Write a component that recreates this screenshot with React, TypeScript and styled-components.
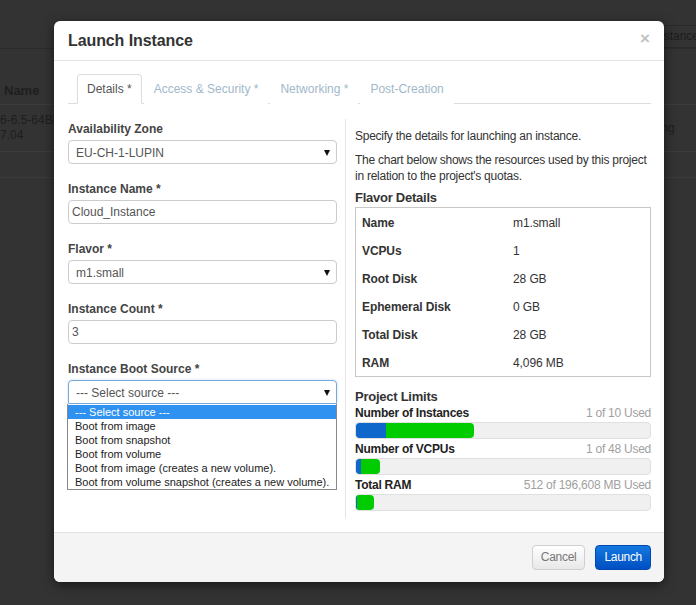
import React from "react";
import styled, { createGlobalStyle } from "styled-components";

type Limit = { label: string; used: string; current: number; added: number };

const flavor: [string, string][] = [
  ["Name", "m1.small"],
  ["VCPUs", "1"],
  ["Root Disk", "28 GB"],
  ["Ephemeral Disk", "0 GB"],
  ["Total Disk", "28 GB"],
  ["RAM", "4,096 MB"],
];

// widths in % of the bar, as measured on the chart
const limits: Limit[] = [
  { label: "Number of Instances", used: "1 of 10 Used", current: 10.2, added: 29.8 },
  { label: "Number of VCPUs", used: "1 of 48 Used", current: 1.8, added: 6.4 },
  { label: "Total RAM", used: "512 of 196,608 MB Used", current: 0.4, added: 5.8 },
];

const bootSources = [
  "--- Select source ---",
  "Boot from image",
  "Boot from snapshot",
  "Boot from volume",
  "Boot from image (creates a new volume).",
  "Boot from volume snapshot (creates a new volume).",
];

const GlobalStyle = createGlobalStyle`
  html, body { margin: 0; padding: 0; }
  body {
    background: #333;
    font-family: "Liberation Sans", Arial, Helvetica, sans-serif;
    overflow: hidden;
  }
  * { box-sizing: border-box; }
`;

const Page = styled.div`
  position: relative;
  width: 696px;
  height: 605px;
  overflow: hidden;
  background: #333;
  color: #1e1e1e;
  font-size: 12px;
`;

//{{{ dimmed page behind the dialog
const BgToolbar = styled.div`
  height: 49px;
  display: flex;
  justify-content: flex-end;
  align-items: flex-end;
  border-bottom: 1px solid #2c2c2c;
`;

const BgButton = styled.div`
  height: 23px;
  margin-right: -14px;
  padding: 0 10px;
  border: 1px solid #292929;
  border-radius: 3px;
  line-height: 21px;
  white-space: nowrap;
`;

const BgRow = styled.div<{ $h: number }>`
  display: grid;
  grid-template-columns: 54px 1fr 70px;
  height: ${(p) => p.$h}px;
  border-bottom: 1px solid #3b3b3b;
`;

const BgCell = styled.div<{ $justify?: string; $bold?: boolean }>`
  display: flex;
  flex-direction: column;
  justify-content: ${(p) => p.$justify || "center"};
  padding: 0 2px 0 4px;
  overflow: hidden;
  white-space: nowrap;
  line-height: 15px;
  font-weight: ${(p) => (p.$bold ? "bold" : "normal")};
  font-size: ${(p) => (p.$bold ? "13px" : "12px")};
`;
//}}}

const Modal = styled.div`
  position: absolute;
  left: 54px;
  top: 21px;
  width: 610px;
  height: 561px;
  display: flex;
  flex-direction: column;
  background: #fff;
  border-radius: 6px;
  box-shadow: 0 3px 12px rgba(0, 0, 0, 0.55);
  color: #333;
  font-size: 12px;
`;

const Header = styled.div`
  flex: none;
  height: 40px;
  display: flex;
  align-items: center;
  justify-content: space-between;
  padding: 0 14px;
  border-bottom: 1px solid #e5e5e5;
`;

const Title = styled.h3`
  margin: 0;
  font-size: 16px;
  font-weight: bold;
  color: #333;
  letter-spacing: -0.1px;
`;

const Close = styled.span`
  font-size: 17px;
  font-weight: bold;
  line-height: 20px;
  color: #c2c2c2;
  margin-top: -4px;
`;

const Body = styled.div`
  flex: 1;
  display: flex;
  flex-direction: column;
  padding: 13px 13px 14px 14px;
`;

const Tabs = styled.ul`
  display: flex;
  height: 30px;
  margin: 0;
  padding: 0 0 0 9px;
  list-style: none;
  border-bottom: 1px solid #ddd;
`;

const Tab = styled.li<{ $active?: boolean }>`
  height: 30px;
  margin: 0 2px -1px 0;
  padding: 0 9px;
  line-height: 28px;
  background: #fff;
  border: 1px solid ${(p) => (p.$active ? "#ddd" : "transparent")};
  border-bottom-color: ${(p) => (p.$active ? "#fff" : "transparent")};
  border-radius: 4px 4px 0 0;
  color: ${(p) => (p.$active ? "#555" : "#a2b8c9")};
  white-space: nowrap;
`;

const Columns = styled.div`
  flex: 1;
  display: flex;
  margin-top: 15px;
`;

const LeftCol = styled.div`
  width: 269px;
  flex: none;
  padding-top: 1px;
`;

const RightCol = styled.div`
  flex: 1;
  margin-left: 8px;
  padding: 9px 0 0 9px;
  border-left: 1px solid #e5e5e5;
  letter-spacing: -0.25px;
`;

const Field = styled.div`
  position: relative;
  margin-bottom: 16px;
`;

const Label = styled.label`
  display: block;
  margin-bottom: 4px;
  padding-top: 1px;
  height: 16px;
  font-size: 12px;
  font-weight: bold;
  line-height: 16px;
  color: #444;
`;

const TextInput = styled.input`
  display: block;
  width: 100%;
  height: 24px;
  padding: 0 3px;
  border: 1px solid #ccc;
  border-radius: 4px;
  font-family: "Liberation Sans", Arial, sans-serif;
  font-size: 12px;
  color: #555;
  outline: none;
`;

const Select = styled.div<{ $focus?: boolean }>`
  height: 24px;
  display: flex;
  align-items: center;
  justify-content: space-between;
  padding: 1px 6px 0 7px;
  border: 1px solid ${(p) => (p.$focus ? "#79a8de" : "#ccc")};
  border-radius: ${(p) => (p.$focus ? "4px 4px 0 0" : "4px")};
  box-shadow: ${(p) => (p.$focus ? "0 0 2px rgba(102, 160, 233, 0.5)" : "none")};
  color: #555;
`;

const Caret = styled.span`
  width: 0;
  height: 0;
  border-left: 3px solid transparent;
  border-right: 3px solid transparent;
  border-top: 6px solid #111;
`;

const DropList = styled.ul`
  position: absolute;
  top: 100%;
  left: -1px;
  right: 0;
  z-index: 2;
  margin: 0;
  padding: 1px 0 0;
  list-style: none;
  background: #fff;
  border: 1px solid #8a8a8a;
  border-top: none;
`;

const DropItem = styled.li<{ $selected?: boolean }>`
  height: 14px;
  padding-left: 7px;
  font-size: 11px;
  line-height: 15px;
  white-space: nowrap;
  color: ${(p) => (p.$selected ? "#fff" : "#222")};
  background: ${(p) => (p.$selected ? "#3092f0" : "transparent")};
`;

const Intro = styled.p<{ $gap: number }>`
  margin: 0 0 ${(p) => p.$gap}px;
  line-height: 16px;
  color: #333;
`;

const SectionTitle = styled.h4`
  margin: 0 0 1px;
  font-size: 13px;
  font-weight: bold;
  line-height: 16px;
  color: #333;
`;

const FlavorBox = styled.div`
  border: 1px solid #c8c8c8;
  margin-bottom: 12px;
  letter-spacing: -0.1px;
`;

const FlavorRow = styled.div`
  display: grid;
  grid-template-columns: 151px 1fr;
  height: 28px;
  align-items: center;
  padding: 1px 0 0 6px;
`;

const FlavorKey = styled.span`
  font-weight: bold;
`;

const LimitHead = styled.div`
  display: flex;
  justify-content: space-between;
  height: 14px;
  line-height: 15px;
  margin-bottom: 2px;
`;

const LimitName = styled.span`
  font-weight: bold;
  color: #222;
`;

const LimitUsed = styled.span`
  color: #a0a0a0;
`;

const Bar = styled.div`
  display: flex;
  height: 17px;
  margin-bottom: 3px;
  background: #f0f0f0;
  border: 1px solid #e0e0e0;
  border-radius: 4px;
  overflow: hidden;
`;

const BarPart = styled.div<{ $kind: "current" | "added" }>`
  height: 100%;
  background: ${(p) => (p.$kind === "current" ? "#0f67cc" : "#00cc00")};
  border-radius: ${(p) => (p.$kind === "current" ? "3px 0 0 3px" : "0 4px 4px 0")};
`;

const Footer = styled.div`
  flex: none;
  height: 50px;
  display: flex;
  align-items: center;
  justify-content: flex-end;
  gap: 10px;
  padding: 0 13px 1px 0;
  background: #f4f4f4;
  border-top: 1px solid #e2e2e2;
  border-radius: 0 0 6px 6px;
`;

const Button = styled.button<{ $primary?: boolean }>`
  height: 25px;
  padding: 0 8px;
  font-family: "Liberation Sans", Arial, sans-serif;
  font-size: 12px;
  letter-spacing: -0.3px;
  border-radius: 4px;
  cursor: pointer;
  color: ${(p) => (p.$primary ? "#fff" : "#777")};
  border: 1px solid ${(p) => (p.$primary ? "#0049b2" : "#cfcfcf")};
  background: ${(p) =>
    p.$primary
      ? "linear-gradient(#1479df, #004fc2)"
      : "linear-gradient(#ffffff, #e8e8e8)"};
`;

const App = () => {
  return (
    <Page>
      <GlobalStyle />
      <BgToolbar>
        <BgButton>+ Launch Instance</BgButton>
      </BgToolbar>
      <BgRow $h={56}>
        <BgCell $justify="flex-end" $bold style={{ paddingBottom: 6 }}>Name</BgCell>
        <BgCell />
        <BgCell $justify="flex-start" style={{ paddingTop: 19 }}>Flavor</BgCell>
      </BgRow>
      <BgRow $h={47}>
        <BgCell style={{ paddingLeft: 0 }}>
          <span>6-6.5-64Bit-</span>
          <span>7.04</span>
        </BgCell>
        <BgCell />
        <BgCell>Running</BgCell>
      </BgRow>
      <BgRow $h={26} />

      <Modal>
        <Header>
          <Title>Launch Instance</Title>
          <Close>×</Close>
        </Header>
        <Body>
          <Tabs>
            <Tab $active>Details *</Tab>
            <Tab>Access &amp; Security *</Tab>
            <Tab>Networking *</Tab>
            <Tab>Post-Creation</Tab>
          </Tabs>
          <Columns>
            <LeftCol>
              <Field>
                <Label>Availability Zone</Label>
                <Select>
                  EU-CH-1-LUPIN
                  <Caret />
                </Select>
              </Field>
              <Field>
                <Label>Instance Name *</Label>
                <TextInput defaultValue="Cloud_Instance" />
              </Field>
              <Field>
                <Label>Flavor *</Label>
                <Select>
                  m1.small
                  <Caret />
                </Select>
              </Field>
              <Field>
                <Label>Instance Count *</Label>
                <TextInput defaultValue="3" />
              </Field>
              <Field style={{ marginTop: 1 }}>
                <Label>Instance Boot Source *</Label>
                <Select $focus>
                  --- Select source ---
                  <Caret />
                </Select>
                <DropList>
                  {bootSources.map((s, i) => (
                    <DropItem key={s} $selected={i === 0}>{s}</DropItem>
                  ))}
                </DropList>
              </Field>
            </LeftCol>
            <RightCol>
              <Intro $gap={8}>Specify the details for launching an instance.</Intro>
              <Intro $gap={6}>
                The chart below shows the resources used by this project in relation to the project's quotas.
              </Intro>
              <SectionTitle>Flavor Details</SectionTitle>
              <FlavorBox>
                {flavor.map(([k, v]) => (
                  <FlavorRow key={k}>
                    <FlavorKey>{k}</FlavorKey>
                    <span>{v}</span>
                  </FlavorRow>
                ))}
              </FlavorBox>
              <SectionTitle>Project Limits</SectionTitle>
              {limits.map((l) => (
                <div key={l.label}>
                  <LimitHead>
                    <LimitName>{l.label}</LimitName>
                    <LimitUsed>{l.used}</LimitUsed>
                  </LimitHead>
                  <Bar>
                    <BarPart $kind="current" style={{ width: `${l.current}%` }} />
                    <BarPart $kind="added" style={{ width: `${l.added}%` }} />
                  </Bar>
                </div>
              ))}
            </RightCol>
          </Columns>
        </Body>
        <Footer>
          <Button>Cancel</Button>
          <Button $primary>Launch</Button>
        </Footer>
      </Modal>
    </Page>
  );
};

export default App;
